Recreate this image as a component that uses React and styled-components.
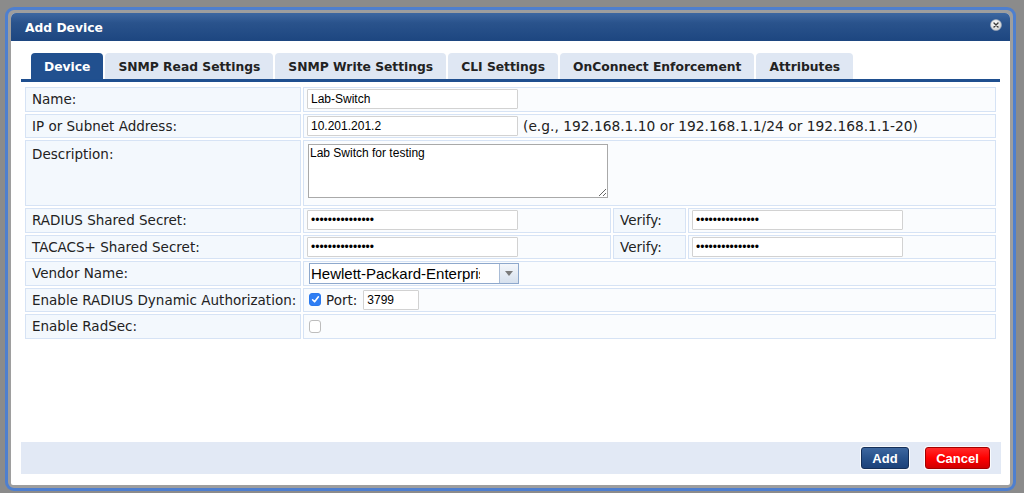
import React from "react";
import styled, { createGlobalStyle } from "styled-components";

const GlobalStyle = createGlobalStyle`
  html, body { margin: 0; padding: 0; }
  body {
    width: 1024px;
    height: 493px;
    overflow: hidden;
    background: #8b8b8b;
    font-family: "DejaVu Sans", Verdana, sans-serif;
  }
`;

const Page = styled.div`
  box-sizing: border-box;
  height: 493px;
  padding: 7px 0 0 5px;
`;

const Dialog = styled.div`
  box-sizing: border-box;
  width: 1011px;
  height: 484px;
  border: 3px solid #4e7fcf;
  border-radius: 9px;
  background: #9e9e9e;
  padding: 3px;
`;

const Frame = styled.div`
  height: 100%;
  background: #fff;
  border-radius: 5px 5px 2px 2px;
  display: flex;
  flex-direction: column;
  overflow: hidden;
`;

const TitleBar = styled.div`
  box-sizing: border-box;
  height: 28px;
  flex: none;
  display: flex;
  align-items: center;
  justify-content: space-between;
  padding: 2px 8px 0 14px;
  background: linear-gradient(#3d67a1 0%, #2a538c 35%, #1d4680 100%);
`;

const Title = styled.div`
  color: #fff;
  font: bold 12.3px "DejaVu Sans", Verdana, sans-serif;
`;

const CloseBtn = styled.div`
  width: 12px;
  height: 12px;
  align-self: flex-start;
  margin-top: 4px;
  display: flex;
`;

const Body = styled.div`
  flex: 1;
  display: flex;
  flex-direction: column;
  padding: 12px 10px 11px 10px;
`;

const TabList = styled.div`
  display: flex;
  gap: 2px;
  padding-left: 10px;
  border-bottom: 3px solid #1f4f8f;
`;

const Tab = styled.div`
  box-sizing: border-box;
  height: 26px;
  display: flex;
  align-items: center;
  padding: 1px 13px 0;
  border-radius: 4px 4px 0 0;
  background: ${(p) => (p.$active ? "#21508f" : "#dfe7f3")};
  color: ${(p) => (p.$active ? "#fff" : "#222")};
  font: bold 12.3px "DejaVu Sans", Verdana, sans-serif;
  white-space: nowrap;
`;

const FormTable = styled.table`
  margin: 3px 2px 0 2px;
  border-collapse: separate;
  border-spacing: 2px;
  table-layout: fixed;
  width: calc(100% - 4px);
`;

const cellBase = `
  box-sizing: border-box;
  border: 1px solid #d6e3f5;
  color: #222;
`;

const LabelCell = styled.td`
  ${cellBase}
  font-size: 13.5px;
  height: ${(p) => (p.$tall ? "66px" : "24.5px")};
  background: #f3f8fd;
  padding: ${(p) => (p.$tall ? "5px 6px 0" : "0 6px")};
  vertical-align: ${(p) => (p.$tall ? "top" : "middle")};
  white-space: nowrap;
`;

const ValueCell = styled.td`
  ${cellBase}
  font-size: 13.5px;
  height: ${(p) => (p.$tall ? "66px" : "24.5px")};
  background: #fafcfe;
  padding: ${(p) => (p.$tall ? "3px 3px 0" : "0 3px")};
  vertical-align: ${(p) => (p.$tall ? "top" : "middle")};
  white-space: nowrap;
`;

const Inline = styled.div`
  display: flex;
  align-items: center;
`;

const TextInput = styled.input`
  box-sizing: border-box;
  width: ${(p) => p.$w || 211}px;
  height: 20px;
  border: 1px solid #d2d2d2;
  border-radius: 1px;
  padding: 0 3px;
  margin: 0 0 0 ${(p) => p.$ml || 0}px;
  font: 12px "Liberation Sans", Arial, sans-serif;
  color: #000;
  background: #fff;
  outline: none;
`;

const Hint = styled.span`
  margin-left: 5px;
  font-size: 13.8px;
  color: #222;
`;

const TextArea = styled.textarea`
  box-sizing: border-box;
  width: 300px;
  height: 54px;
  margin: 0 0 0 1px;
  border: 1px solid #a9a9a9;
  padding: 1px 1px;
  font: 12px "Liberation Sans", Arial, sans-serif;
  color: #000;
  display: block;
  resize: both;
  outline: none;
`;

const SelectBox = styled.div`
  box-sizing: border-box;
  width: 210px;
  height: 21px;
  margin-left: 2px;
  border: 1px solid #8ea8cc;
  background: #fff;
  display: flex;
`;

const SelectText = styled.div`
  flex: 1;
  overflow: hidden;
  white-space: nowrap;
  margin: 0 19px 0 1px;
  font: 15px/19px "Liberation Sans", Arial, sans-serif;
  color: #000;
`;

const SelectArrow = styled.div`
  width: 18px;
  flex: none;
  border-left: 1px solid #a9bcd6;
  background: linear-gradient(#f4f7fb, #d7e1ee);
  display: flex;
  align-items: center;
  justify-content: center;
  &::after {
    content: "";
    border-left: 4px solid transparent;
    border-right: 4px solid transparent;
    border-top: 5px solid #7b7b7b;
  }
`;

const CheckBox = styled.span`
  box-sizing: border-box;
  width: 12px;
  height: 13px;
  margin-left: 2px;
  border-radius: 3px;
  border: 1px solid ${(p) => (p.$checked ? "#2a79ee" : "#bdbdbd")};
  background: ${(p) => (p.$checked ? "#2f7ef3" : "#fff")};
  display: inline-flex;
  align-items: center;
  justify-content: center;
  flex: none;
`;

const InlineLabel = styled.span`
  margin-left: 5px;
  font-size: 13.5px;
  color: #222;
`;

const Footer = styled.div`
  margin-top: auto;
  height: 32px;
  background: #e2e9f5;
  display: flex;
  align-items: center;
  justify-content: flex-end;
  gap: 16px;
  padding-right: 11px;
  margin-right: -1px;
`;

const Button = styled.button`
  box-sizing: border-box;
  height: 22px;
  width: ${(p) => p.$w}px;
  border-radius: 3px;
  border: 1px solid ${(p) => (p.$danger ? "#a30000" : "#152f58")};
  background: ${(p) =>
    p.$danger
      ? "linear-gradient(#ff2a2a 0%, #f00 50%, #d00000 100%)"
      : "linear-gradient(#3d679f 0%, #28528b 50%, #1c427a 100%)"};
  color: #fff;
  font: bold 13px "Liberation Sans", Arial, sans-serif;
  padding: 0;
  box-shadow: 0 0 0 1px rgba(255, 255, 255, 0.8);
`;

const tabs = [
  "Device",
  "SNMP Read Settings",
  "SNMP Write Settings",
  "CLI Settings",
  "OnConnect Enforcement",
  "Attributes",
];

const secret = "aaaaaaaaaaaaaaa";

function Check({ checked }) {
  return (
    <CheckBox $checked={checked} role="checkbox" aria-checked={checked}>
      {checked && (
        <svg width="9" height="9" viewBox="0 0 9 9">
          <path d="M1.6 4.8 L3.6 6.8 L7.4 1.8" fill="none" stroke="#fff" strokeWidth="1.6" strokeLinecap="round" strokeLinejoin="round" />
        </svg>
      )}
    </CheckBox>
  );
}

export default function App() {
  return (
    <>
      <GlobalStyle />
      <Page>
        <Dialog>
          <Frame>
            <TitleBar>
              <Title>Add Device</Title>
              <CloseBtn>
                <svg width="12" height="12" viewBox="0 0 12 12">
                  <defs>
                    <radialGradient id="cg" cx="40%" cy="35%" r="70%">
                      <stop offset="0%" stopColor="#ffffff" />
                      <stop offset="100%" stopColor="#cfcfcf" />
                    </radialGradient>
                  </defs>
                  <circle cx="6" cy="6" r="5.5" fill="url(#cg)" stroke="#9aa6b8" strokeWidth="0.6" />
                  <path d="M4 4 L8 8 M8 4 L4 8" stroke="#3a3a3a" strokeWidth="1.4" strokeLinecap="round" />
                </svg>
              </CloseBtn>
            </TitleBar>
            <Body>
              <TabList>
                {tabs.map((t, i) => (
                  <Tab key={t} $active={i === 0}>
                    {t}
                  </Tab>
                ))}
              </TabList>
              <FormTable>
                <colgroup>
                  <col style={{ width: 276 }} />
                  <col style={{ width: 308 }} />
                  <col style={{ width: 73 }} />
                  <col />
                </colgroup>
                <tbody>
                  <tr>
                    <LabelCell>Name:</LabelCell>
                    <ValueCell colSpan={3}>
                      <TextInput defaultValue="Lab-Switch" />
                    </ValueCell>
                  </tr>
                  <tr>
                    <LabelCell>IP or Subnet Address:</LabelCell>
                    <ValueCell colSpan={3}>
                      <Inline>
                        <TextInput defaultValue="10.201.201.2" />
                        <Hint>(e.g., 192.168.1.10 or 192.168.1.1/24 or 192.168.1.1-20)</Hint>
                      </Inline>
                    </ValueCell>
                  </tr>
                  <tr>
                    <LabelCell $tall>Description:</LabelCell>
                    <ValueCell colSpan={3} $tall>
                      <TextArea defaultValue="Lab Switch for testing" />
                    </ValueCell>
                  </tr>
                  <tr>
                    <LabelCell>RADIUS Shared Secret:</LabelCell>
                    <ValueCell>
                      <TextInput type="password" defaultValue={secret} />
                    </ValueCell>
                    <LabelCell>Verify:</LabelCell>
                    <ValueCell>
                      <TextInput type="password" defaultValue={secret} />
                    </ValueCell>
                  </tr>
                  <tr>
                    <LabelCell>TACACS+ Shared Secret:</LabelCell>
                    <ValueCell>
                      <TextInput type="password" defaultValue={secret} />
                    </ValueCell>
                    <LabelCell>Verify:</LabelCell>
                    <ValueCell>
                      <TextInput type="password" defaultValue={secret} />
                    </ValueCell>
                  </tr>
                  <tr>
                    <LabelCell>Vendor Name:</LabelCell>
                    <ValueCell colSpan={3}>
                      <SelectBox>
                        <SelectText>Hewlett-Packard-Enterprise</SelectText>
                        <SelectArrow />
                      </SelectBox>
                    </ValueCell>
                  </tr>
                  <tr>
                    <LabelCell>Enable RADIUS Dynamic Authorization:</LabelCell>
                    <ValueCell colSpan={3}>
                      <Inline>
                        <Check checked />
                        <InlineLabel>Port:</InlineLabel>
                        <TextInput defaultValue="3799" $w={56} $ml={6} />
                      </Inline>
                    </ValueCell>
                  </tr>
                  <tr>
                    <LabelCell>Enable RadSec:</LabelCell>
                    <ValueCell colSpan={3}>
                      <Inline>
                        <Check checked={false} />
                      </Inline>
                    </ValueCell>
                  </tr>
                </tbody>
              </FormTable>
              <Footer>
                <Button $w={48}>Add</Button>
                <Button $w={65} $danger>
                  Cancel
                </Button>
              </Footer>
            </Body>
          </Frame>
        </Dialog>
      </Page>
    </>
  );
}
